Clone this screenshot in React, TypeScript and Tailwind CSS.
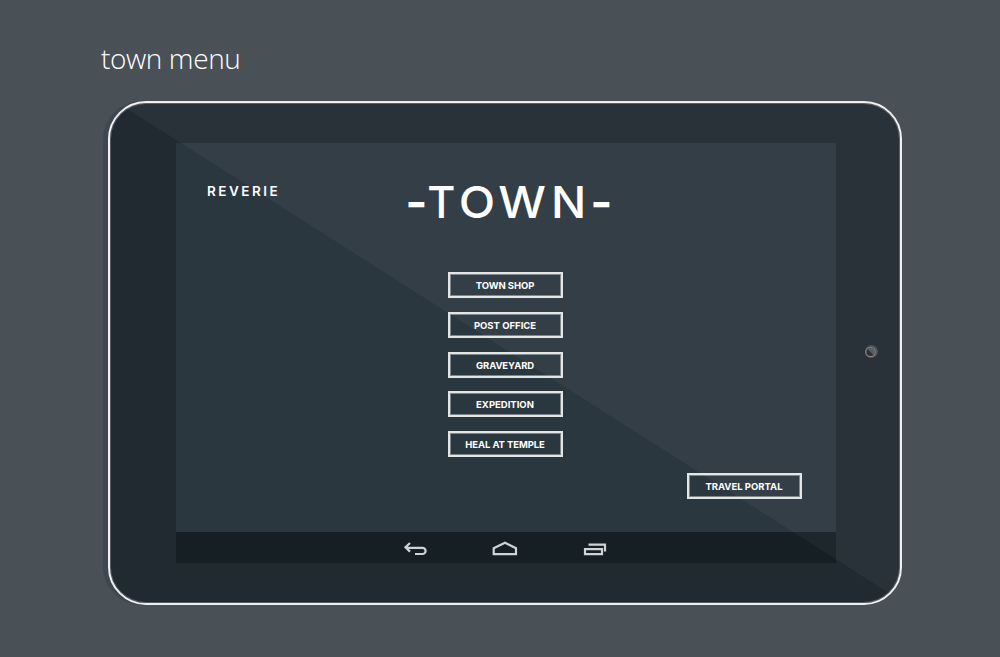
import type { ReactNode } from "react";

const actions = [
  { label: "TOWN SHOP", gap: "mb-[14px]", fit: "tracking-[-0.1px]" },
  { label: "POST OFFICE", gap: "mb-[14px]", fit: "tracking-[0px]" },
  { label: "GRAVEYARD", gap: "mb-[13px]", fit: "tracking-[-0.1px]" },
  { label: "EXPEDITION", gap: "mb-[14px]", fit: "tracking-[0px]" },
  { label: "HEAL AT TEMPLE", gap: "", fit: "tracking-[-0.1px]" },
];

const titleGlyphs = [
  { glyph: "-", box: "w-[18px] font-bold", stretch: "scale-x-[1.08]" },
  { glyph: "T", box: "w-[33px]", stretch: "scale-x-[0.98]" },
  { glyph: "O", box: "w-[37px]", stretch: "scale-x-[1.08]" },
  { glyph: "W", box: "w-[55px]", stretch: "scale-x-[1.08]" },
  { glyph: "N", box: "w-[37px]", stretch: "scale-x-[1.06]" },
  { glyph: "-", box: "w-[29px] font-bold", stretch: "scale-x-[1.08]" },
];

function MenuButton({ children, className = "" }: { children: ReactNode; className?: string }) {
  return (
    <button
      className={`flex h-[26px] w-[115px] shrink-0 items-center justify-center whitespace-nowrap border-2 border-[#e2e5e6] pr-px pt-px font-['Inter',sans-serif] text-[9.5px] font-bold leading-none text-white shadow-[inset_0_0_0_1px_rgba(226,229,230,0.45)] ${className}`}
    >
      {children}
    </button>
  );
}

function NavBar() {
  return (
    <nav className="flex h-[31px] shrink-0 items-start bg-[#151f24] pl-[227px] pt-[9px] text-[#d0d3d4]">
      <svg width="26" height="16" viewBox="0 0 26 16" fill="none" stroke="currentColor" strokeWidth="2.200">
        <path d="M7 2 2.500 6.300 7 10.600M2.500 6.800H19.500a3.100 3.100 0 0 1 0 6.200H12" />
      </svg>
      <svg className="ml-[63px]" width="26" height="16" viewBox="0 0 26 16" fill="none" stroke="currentColor" strokeWidth="2.200">
        <path d="M1.700 13.200V7.300L13 1.800l11 5.500v5.900Z" />
      </svg>
      <svg className="ml-[65px]" width="24" height="16" viewBox="0 0 24 16" fill="none" stroke="currentColor" strokeWidth="2.200">
        <path d="M2 8.200h17v5H2ZM5.500 3.700H22V10.500" />
      </svg>
    </nav>
  );
}

export default function App() {
  return (
    <main className="h-[657px] w-[1000px] overflow-hidden bg-[#495056]">
      <h1 className="flex h-[101px] items-start pl-[101px] pt-[39px] font-['Open_Sans',sans-serif] text-[28px] font-light leading-[38px] tracking-[-0.4px] text-white">
        town menu
      </h1>
      <div className="ml-[103px] h-[504px] w-[799px] rounded-[38px] bg-[#3e4852] pl-[5px]">
        <section className="relative flex h-[504px] w-[794px] items-start overflow-hidden rounded-[38px] border-2 border-[#f0f0ef] bg-[#222a31] shadow-[inset_0_0_0_1px_rgba(240,240,239,0.25)]">
          <div className="pointer-events-none absolute inset-0 bg-white/4 [clip-path:polygon(0_-5px,100%_-5px,100%_497px)]" />
          <div className="ml-[66px] mt-[40px] flex h-[420px] w-[660px] flex-col bg-[#2b373f]">
            <div className="flex h-[389px] flex-col">
              <header className="flex h-[129px] items-start">
                <span className="w-[200px] pl-[31px] pt-[39px] font-['Inter',sans-serif] text-[13.5px] font-semibold leading-[18px] tracking-[2.5px] text-white">
                  REVERIE
                </span>
                <h2 className="flex pl-[31px] pt-[31px] font-['Inter',sans-serif] text-[44px] font-medium leading-[56px] text-white">
                  {titleGlyphs.map(({ glyph, box, stretch }, index) => (
                    <span key={index} className={`flex justify-center ${box}`}>
                      <span className={stretch}>{glyph}</span>
                    </span>
                  ))}
                </h2>
              </header>
              <div className="flex flex-col items-start pl-[272px]">
                {actions.map(({ label, gap, fit }) => (
                  <MenuButton key={label} className={`${gap} ${fit}`}>
                    {label}
                  </MenuButton>
                ))}
              </div>
              <div className="mt-[16px] flex justify-end pr-[34px]">
                <MenuButton>TRAVEL PORTAL</MenuButton>
              </div>
            </div>
            <NavBar />
          </div>
          <svg className="ml-[27px] mt-[240px]" width="16" height="16" viewBox="0 0 16 16" fill="none">
            <circle cx="8.500" cy="8.500" r="6.500" fill="#4b4d4f" />
            <circle cx="7.500" cy="9" r="4.700" fill="#29292b" stroke="#807e7c" strokeWidth="1.300" />
            <path d="m4.500 6 6 6a4.200 4.200 0 0 0-6-6Z" fill="#55585a" />
          </svg>
        </section>
      </div>
    </main>
  );
}
